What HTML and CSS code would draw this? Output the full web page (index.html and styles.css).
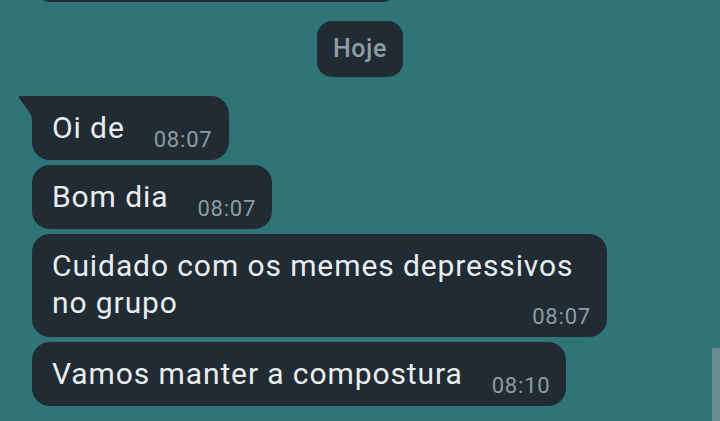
FILE: index.html
```html
<!DOCTYPE html>
<html lang="pt">

<head>
    <meta charset="UTF-8">
    <meta name="viewport" content="width=device-width, initial-scale=1.0">
    <title>Conversa</title>
    <link rel="stylesheet" href="styles.css">
</head>

<body>
    <div class="chat">
        <!-- fim da mensagem anterior -->
        <div class="msg prev"></div>

        <div class="day">
            <span class="day-chip">Hoje</span>
        </div>

        <div class="messages">
            <div class="msg first">
                <svg class="tail" width="16" height="26" viewBox="0 0 16 26">
                    <path d="M16 0 H2 Q0 0 1 2 L9 13 Q14 19 14 24 V26 H16 Z" fill="#212b33" />
                </svg>
                <span class="text">Oi de</span>
                <span class="time">08:07</span>
            </div>
            <div class="msg">
                <span class="text">Bom dia</span>
                <span class="time">08:07</span>
            </div>
            <div class="msg long">
                <span class="text">Cuidado com os memes depressivos no grupo</span>
                <span class="time">08:07</span>
            </div>
            <div class="msg">
                <span class="text">Vamos manter a compostura</span>
                <span class="time">08:10</span>
            </div>
        </div>

        <div class="scrollbar"></div>
    </div>
</body>

</html>
```

FILE: styles.css
```css
body {
    margin: 0;
    background-color: #30747a;
    font-family: Roboto, "Noto Sans", sans-serif;
}

.chat {
    position: relative;
    height: 421px;
    overflow: hidden;
}

.msg {
    /* balão padrão */
    position: relative;
    display: flex;
    align-items: flex-end;
    max-width: 575px;
    box-sizing: border-box;
    padding: 13px 16px 9px 20px;
    background-color: #212b33;
    border-radius: 18px;
    color: #e9edef;
}

.msg.prev {
    margin: -38px 0 0 33px;
    width: 367px;
    height: 40px;
    padding: 0;
}

.msg.first {
    border-top-left-radius: 0;
}

.tail {
    position: absolute;
    left: -14px;
    top: 0;
}

.text {
    font-size: 30px;
    line-height: 37px;
    letter-spacing: 0.9px;
    margin-bottom: 5px;
}

.time {
    font-size: 22px;
    line-height: 22px;
    letter-spacing: 0.8px;
    color: #8c9ba4;
    margin-left: 29px;
    white-space: nowrap;
}

.msg.long {
    /* texto quebra em duas linhas, hora fica embaixo à direita */
    flex-direction: column;
    width: 575px;
}

.msg.long .text {
    align-self: flex-start;
    margin-bottom: 0;
}

.msg.long .time {
    margin-top: -15px;
}

.day {
    display: flex;
    justify-content: center;
    margin: 19px 0;
}

.day-chip {
    height: 56px;
    line-height: 56px;
    padding: 0 16px;
    border-radius: 15px;
    background-color: #212b33;
    color: #8e9da5;
    font-size: 25px;
    font-weight: 500;
    letter-spacing: 0.6px;
}

.messages {
    display: flex;
    flex-direction: column;
    align-items: flex-start;
    gap: 5px;
    margin-left: 32px;
}

.scrollbar {
    position: absolute;
    right: 0;
    top: 348px;
    width: 8px;
    height: 73px;
    background-color: #6a8d91;
}
```
